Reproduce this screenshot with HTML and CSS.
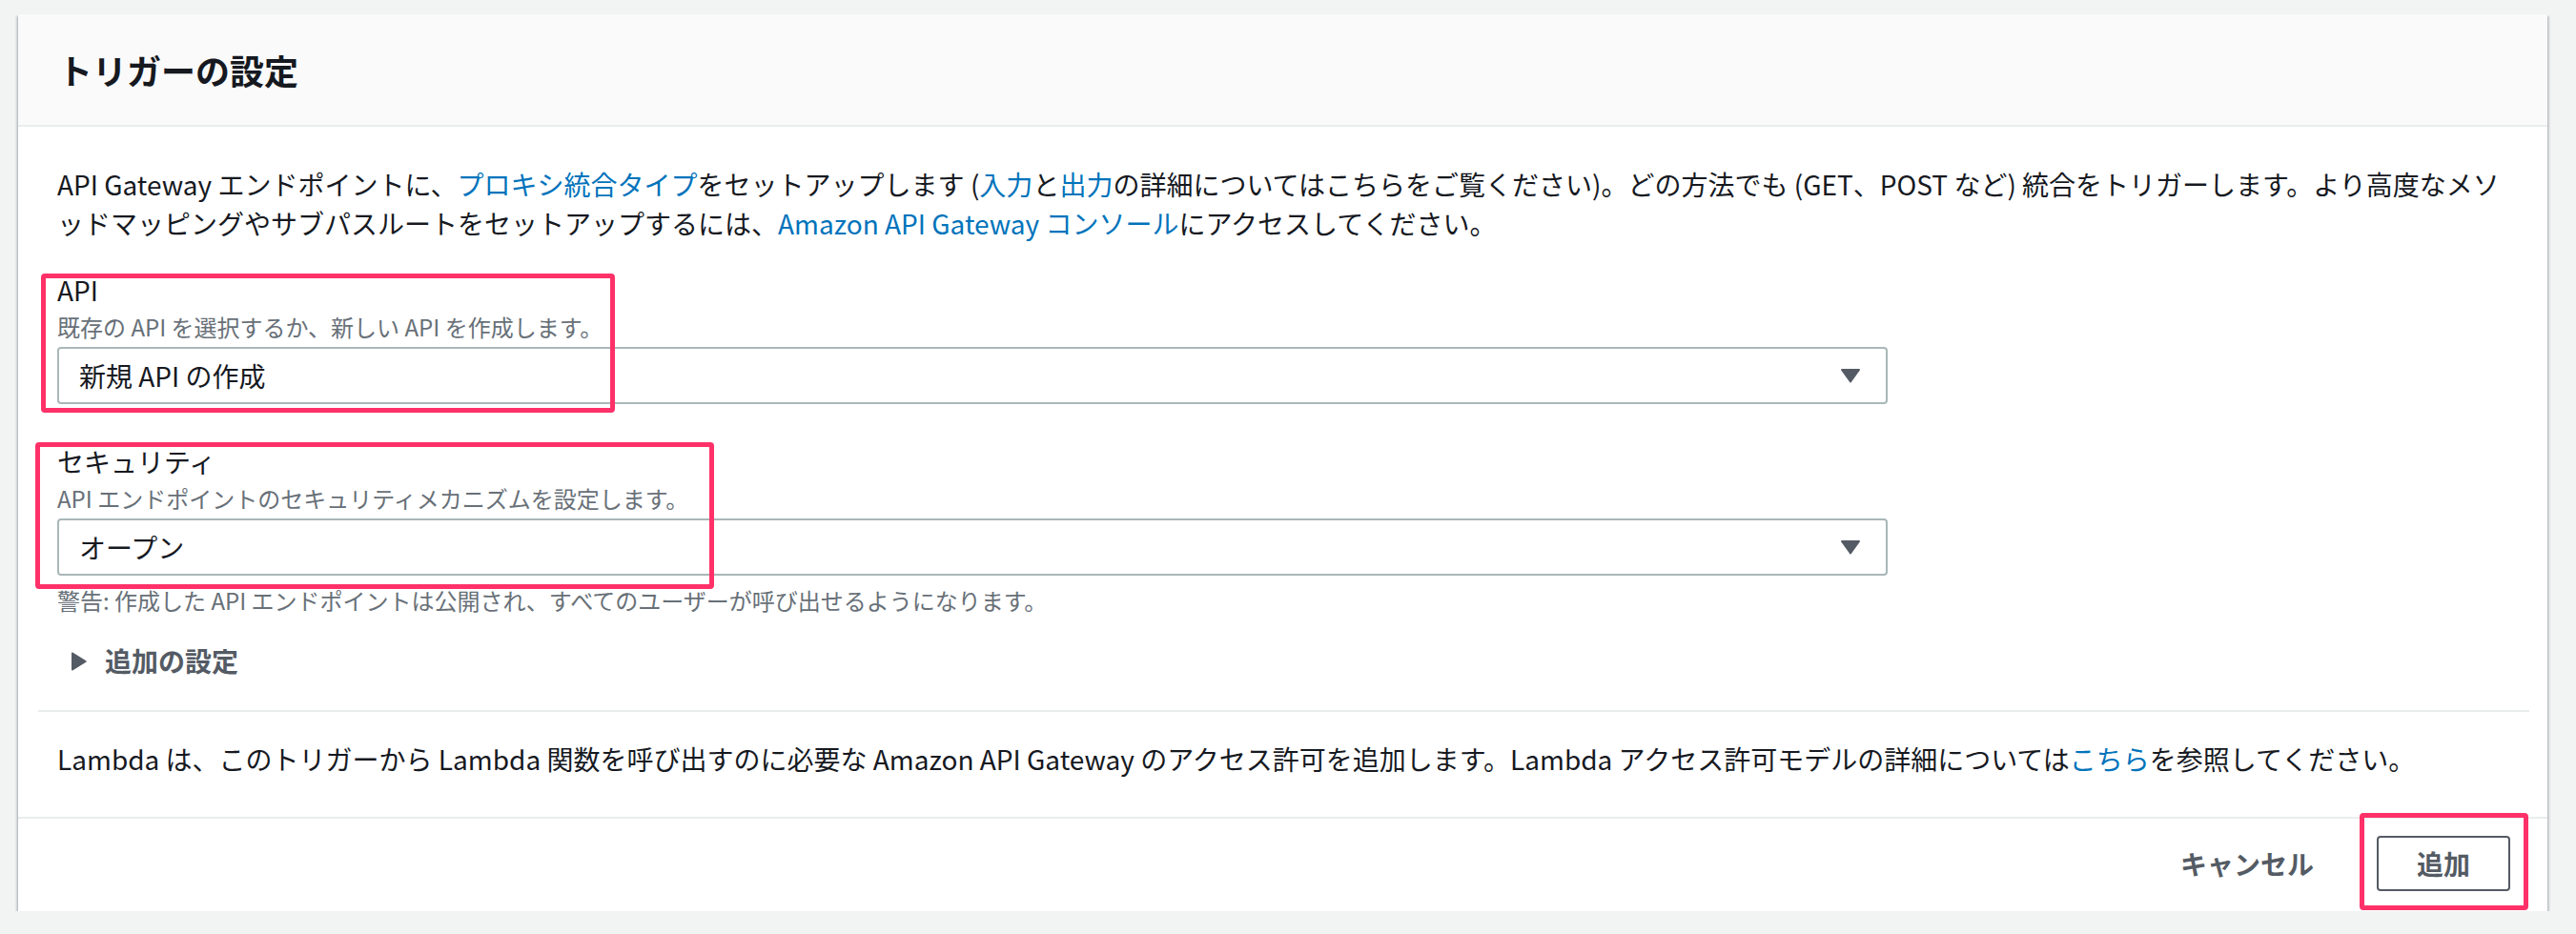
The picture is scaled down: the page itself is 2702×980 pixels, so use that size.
FILE: index.html
```html
<!DOCTYPE html>
<html>
  <head>
    <meta charset="UTF-8">
    <title>トリガーの設定</title>
    <link rel="stylesheet" href="styles.css">
  </head>
  <body>
    <div class="page">
      <section class="card">
        <header class="card-header">
          <h2>トリガーの設定</h2>
        </header>

        <div class="card-body">
          <p class="intro">API Gateway エンドポイントに、<a href="#">プロキシ統合タイプ</a>をセットアップします (<a href="#">入力</a>と<a href="#">出力</a><span>の詳細についてはこちらをご覧ください)。どの方法でも (GET、POST など) 統合をトリガーします。より高度なメソ</span><span>ッドマッピングやサブパスルートをセットアップするには、</span><a href="#">Amazon API Gateway コンソール</a>にアクセスしてください。</p>

          <div class="field field-first">
            <label class="field-label">API</label>
            <p class="field-desc">既存の API を選択するか、新しい API を作成します。</p>
            <div class="select">
              <span>新規 API の作成</span>
              <svg width="20" height="15" viewBox="0 0 20 15"><path d="M1 0h18a1 1 0 0 1 .8 1.6L10.8 14a1 1 0 0 1-1.6 0L.2 1.6A1 1 0 0 1 1 0z"/></svg>
            </div>
          </div>

          <div class="field">
            <label class="field-label">セキュリティ</label>
            <p class="field-desc">API エンドポイントのセキュリティメカニズムを設定します。</p>
            <div class="select">
              <span>オープン</span>
              <svg width="20" height="15" viewBox="0 0 20 15"><path d="M1 0h18a1 1 0 0 1 .8 1.6L10.8 14a1 1 0 0 1-1.6 0L.2 1.6A1 1 0 0 1 1 0z"/></svg>
            </div>
            <p class="field-hint">警告: 作成した API エンドポイントは公開され、すべてのユーザーが呼び出せるようになります。</p>
          </div>

          <div class="expander">
            <svg width="16" height="20" viewBox="0 0 16 20"><path d="M0 1.5v17a1 1 0 0 0 1.6.8l13.6-8.5a1 1 0 0 0 0-1.6L1.6.7A1 1 0 0 0 0 1.5z"/></svg>
            <span>追加の設定</span>
          </div>

          <hr class="divider">

          <p class="note">Lambda は、このトリガーから Lambda 関数を呼び出すのに必要な Amazon API Gateway のアクセス許可を追加します。Lambda アクセス許可モデルの詳細については<a href="#">こちら</a>を参照してください。</p>
        </div>

        <footer class="card-footer">
          <button class="btn-link">キャンセル</button>
          <button class="btn">追加</button>
        </footer>

        <!-- annotation boxes drawn over the form -->
        <div class="mark mark-api"></div>
        <div class="mark mark-security"></div>
        <div class="mark mark-add"></div>
      </section>
    </div>
  </body>
</html>
```

FILE: styles.css
```css
body {
  margin: 0;
  font-family: "Noto Sans CJK JP", "Noto Sans", sans-serif;
  background-color: #f2f3f3;
  color: #16191f;
}

.page {
  padding: 15px 30px 0 19px;
}

.card {
  position: relative;
  background-color: white;
  box-shadow: 0 2px 2px 0 rgba(0, 28, 36, 0.3), 2px 2px 2px 0 rgba(0, 28, 36, 0.15), -2px 2px 2px 0 rgba(0, 28, 36, 0.15);
}

.card-header {
  padding: 35px 42px;
  background-color: #fafafa;
  border-bottom: 2px solid #eaeded;
}

.card-header h2 {
  margin: 0;
  font-size: 36px;
  line-height: 46px;
  font-weight: 700;
}

.card-body {
  padding: 40px 40px 40px 41px;
}

p {
  margin: 0;
}

a {
  color: #0073bb;
  text-decoration: none;
}

.intro,
.note {
  font-size: 28px;
  line-height: 41px;
}

.field {
  margin-top: 40px;
}

.field-first {
  margin-top: 29px;
}

.field-label {
  display: block;
  font-size: 28px;
  line-height: 41px;
}

.field-desc,
.field-hint {
  font-size: 24px;
  line-height: 35px;
  color: #687078;
}

.field-hint {
  margin-top: 8px;
}

.select {
  display: flex;
  align-items: center;
  justify-content: space-between;
  box-sizing: border-box;
  width: 1920px;
  height: 60px;
  margin-top: 4px;
  padding: 0 27px 0 21px;
  border: 2px solid #aab7b8;
  border-radius: 4px;
  font-size: 28px;
}

.select svg {
  fill: #545b64;
}

.expander {
  display: flex;
  align-items: center;
  gap: 19px;
  margin-top: 26px;
  padding-left: 15px;
  font-size: 28px;
  line-height: 41px;
  font-weight: 700;
  color: #545b64;
}

.expander svg {
  fill: #545b64;
}

.divider {
  margin: 31px -21px 0 -20px;
  border: none;
  border-top: 2px solid #eaeded;
}

.note {
  margin-top: 29px;
}

.card-footer {
  display: flex;
  justify-content: flex-end;
  align-items: center;
  padding: 18px 39px 21px;
  border-top: 2px solid #eaeded;
}

.btn-link,
.btn {
  font-family: inherit;
  font-size: 28px;
  font-weight: 700;
  color: #545b64;
  background: none;
  cursor: pointer;
}

.btn-link {
  margin-right: 66px;
  padding: 0;
  border: none;
}

.btn {
  width: 140px;
  height: 58px;
  padding: 0;
  border: 2px solid #545b64;
  border-radius: 4px;
}

.mark {
  position: absolute;
  border: 5px solid #ff3168;
  border-radius: 4px;
}

.mark-api {
  left: 24px;
  top: 272px;
  width: 592px;
  height: 136px;
}

.mark-security {
  left: 18px;
  top: 449px;
  width: 702px;
  height: 144px;
}

.mark-add {
  left: 2456px;
  top: 838px;
  width: 167px;
  height: 92px;
}
```
